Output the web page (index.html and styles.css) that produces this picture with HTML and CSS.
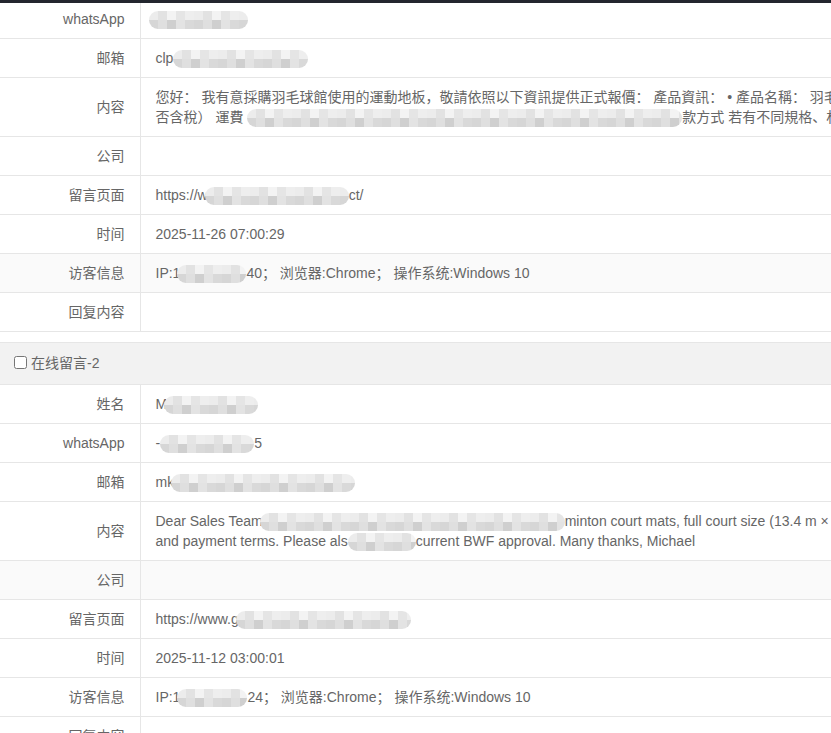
FILE: index.html
```html
<!DOCTYPE html>
<html lang="zh-CN">
<head>
<meta charset="utf-8">
<title>在线留言</title>
<link rel="stylesheet" href="styles.css">
</head>
<body>
<div class="topbar"></div>
<div class="page">
  <table class="msg">
    <colgroup><col class="col-label"><col></colgroup>
    <tbody>
      <tr><td class="label">whatsApp</td><td class="value"><span class="blur shift" style="width:99px"></span></td></tr>
      <tr><td class="label">邮箱</td><td class="value">clp<span class="blur" style="width:135px"></span></td></tr>
      <tr class="tall"><td class="label">内容</td><td class="value">您好： 我有意採購羽毛球館使用的運動地板，敬請依照以下資訊提供正式報價： 產品資訊： • 產品名稱： 羽毛球場運動地板 • 規格：<br>否含稅） 運費 <span class="blur" style="width:435px"></span>款方式 若有不同規格、材質或價格方案，也請一併提供。</td></tr>
      <tr><td class="label">公司</td><td class="value"></td></tr>
      <tr><td class="label">留言页面</td><td class="value">https://w<span class="blur pull" style="width:144px"></span>ct/</td></tr>
      <tr><td class="label">时间</td><td class="value">2025-11-26 07:00:29</td></tr>
      <tr class="shade"><td class="label">访客信息</td><td class="value">IP:1<span class="blur pull" style="width:69px"></span>40； 浏览器:Chrome； 操作系统:Windows 10</td></tr>
      <tr><td class="label">回复内容</td><td class="value"></td></tr>
    </tbody>
  </table>

  <table class="msg">
    <colgroup><col class="col-label"><col></colgroup>
    <thead>
      <tr><th colspan="2" class="group"><label class="check"><input type="checkbox">在线留言-2</label></th></tr>
    </thead>
    <tbody>
      <tr><td class="label">姓名</td><td class="value">M<span class="blur pull" style="width:94px"></span></td></tr>
      <tr><td class="label">whatsApp</td><td class="value">-<span class="blur" style="width:94px"></span>5</td></tr>
      <tr><td class="label">邮箱</td><td class="value">mk<span class="blur pull" style="width:184px"></span></td></tr>
      <tr class="tall"><td class="label">内容</td><td class="value">Dear Sales Team<span class="blur pull" style="width:305px"></span>minton court mats, full court size (13.4 m × 6.1 m), including<br>and payment terms. Please als<span class="blur" style="width:68px"></span>current BWF approval. Many thanks, Michael</td></tr>
      <tr class="shade"><td class="label">公司</td><td class="value"></td></tr>
      <tr><td class="label">留言页面</td><td class="value">https://www.g<span class="blur pull" style="width:175px"></span></td></tr>
      <tr><td class="label">时间</td><td class="value">2025-11-12 03:00:01</td></tr>
      <tr><td class="label">访客信息</td><td class="value">IP:1<span class="blur pull" style="width:70px"></span>24； 浏览器:Chrome； 操作系统:Windows 10</td></tr>
      <tr><td class="label">回复内容</td><td class="value"></td></tr>
    </tbody>
  </table>
</div>
</body>
</html>
```
FILE: styles.css
```css
html, body {
  margin: 0;
  padding: 0;
  overflow: hidden;
  background: #fff;
}

body {
  font-family: "Liberation Sans", Arial, "Noto Sans CJK SC", sans-serif;
  font-size: 14px;
  color: #666;
}

.topbar {
  position: fixed;
  top: 0;
  left: 0;
  right: 0;
  height: 3px;
  background: #23262e;
  z-index: 5;
}

.page {
  width: 1200px;
}

.msg {
  width: 100%;
  border-collapse: collapse;
  table-layout: fixed;
  margin-bottom: 10px;
}

.col-label {
  width: 140px;
}

.msg td {
  height: 38px;
  padding: 0 15px;
  line-height: 20px;
  border-bottom: 1px solid #e6e6e6;
  white-space: nowrap;
  overflow: hidden;
  vertical-align: middle;
}

.msg .tall td {
  height: 58px;
}

.msg .label {
  text-align: right;
  border-right: 1px solid #e6e6e6;
}

.msg .value {
  text-align: left;
}

.msg .shade td {
  background: #fafafa;
}

.msg .group {
  height: 41px;
  background: #f2f2f2;
  border-top: 1px solid #e6e6e6;
  border-bottom: 1px solid #e6e6e6;
  text-align: left;
  font-weight: normal;
  padding: 0 10px;
  line-height: 20px;
  vertical-align: middle;
}

.check {
  display: inline-flex;
  align-items: center;
}

.check input {
  width: 13px;
  height: 13px;
  margin: 0 4px;
}

.blur {
  display: inline-block;
  height: 18px;
  vertical-align: middle;
  border-radius: 9px;
  background:
    repeating-linear-gradient(90deg, #ececec 0 9px, #e2e2e2 9px 18px, #f3f3f3 18px 27px, #e5e5e5 27px 36px, #eeeeee 36px 45px) top / 100% 50% no-repeat,
    repeating-linear-gradient(90deg, #d6d6d6 0 9px, #dfdfdf 9px 18px, #cfcfcf 18px 27px, #e3e3e3 27px 36px, #d9d9d9 36px 45px) bottom / 100% 50% no-repeat;
}

.blur.shift {
  margin-left: -7px;
}

.blur.pull {
  margin-left: -3px;
}
```
